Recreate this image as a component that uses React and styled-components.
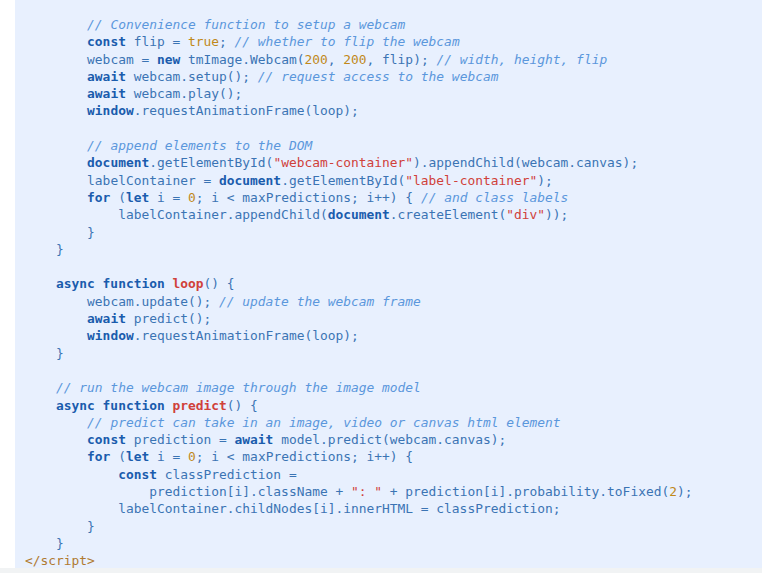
import React from 'react'
import styled, {createGlobalStyle} from 'styled-components'

const GlobalStyle = createGlobalStyle`
  html, body {
    margin: 0;
    padding: 0;
    background: #ffffff;
  }
`

const Page = styled.div`
  width: 762px;
  height: 573px;
  overflow: hidden;
  background: #ffffff;
  display: flex;
  flex-direction: column;
`

const CodeBlock = styled.pre`
  margin: 0 0 0 15px;
  height: 568px;
  box-sizing: border-box;
  padding: 16px 0 0 10px;
  background: #e8f0fe;
  font-family: "DejaVu Sans Mono", "Liberation Mono", monospace;
  font-size: 12.9px;
  line-height: 17.3px;
  color: #3b74b4;
  overflow: hidden;
`

const Footer = styled.div`
  flex: 1;
  background: #f1f3f4;
`

const Line = styled.div`
  white-space: pre;
  height: 17.3px;
`

const colors = {
  p: '#3b74b4',
  k: '#1a5cad',
  c: '#5b97dc',
  s: '#d0413a',
  n: '#c0881a',
  f: '#d0413a',
  t: '#b07a30',
}

const Tok = styled.span`
  color: ${({$type}) => colors[$type]};
  font-weight: ${({$type}) => ($type === 'k' || $type === 'f' ? 700 : 400)};
  font-style: ${({$type}) => ($type === 'c' ? 'italic' : 'normal')};
`

const pad = (n) => ' '.repeat(n)

const lines = [
  [8, [['c', '// Convenience function to setup a webcam']]],
  [8, [['k', 'const'], ['p', ' flip = '], ['n', 'true'], ['p', '; '], ['c', '// whether to flip the webcam']]],
  [8, [['p', 'webcam = '], ['k', 'new'], ['p', ' tmImage.Webcam('], ['n', '200'], ['p', ', '], ['n', '200'], ['p', ', flip); '], ['c', '// width, height, flip']]],
  [8, [['k', 'await'], ['p', ' webcam.setup(); '], ['c', '// request access to the webcam']]],
  [8, [['k', 'await'], ['p', ' webcam.play();']]],
  [8, [['k', 'window'], ['p', '.requestAnimationFrame(loop);']]],
  [0, []],
  [8, [['c', '// append elements to the DOM']]],
  [8, [['k', 'document'], ['p', '.getElementById('], ['s', '"webcam-container"'], ['p', ').appendChild(webcam.canvas);']]],
  [8, [['p', 'labelContainer = '], ['k', 'document'], ['p', '.getElementById('], ['s', '"label-container"'], ['p', ');']]],
  [8, [['k', 'for'], ['p', ' ('], ['k', 'let'], ['p', ' i = '], ['n', '0'], ['p', '; i < maxPredictions; i++) { '], ['c', '// and class labels']]],
  [12, [['p', 'labelContainer.appendChild('], ['k', 'document'], ['p', '.createElement('], ['s', '"div"'], ['p', '));']]],
  [8, [['p', '}']]],
  [4, [['p', '}']]],
  [0, []],
  [4, [['k', 'async function'], ['p', ' '], ['f', 'loop'], ['p', '() {']]],
  [8, [['p', 'webcam.update(); '], ['c', '// update the webcam frame']]],
  [8, [['k', 'await'], ['p', ' predict();']]],
  [8, [['k', 'window'], ['p', '.requestAnimationFrame(loop);']]],
  [4, [['p', '}']]],
  [0, []],
  [4, [['c', '// run the webcam image through the image model']]],
  [4, [['k', 'async function'], ['p', ' '], ['f', 'predict'], ['p', '() {']]],
  [8, [['c', '// predict can take in an image, video or canvas html element']]],
  [8, [['k', 'const'], ['p', ' prediction = '], ['k', 'await'], ['p', ' model.predict(webcam.canvas);']]],
  [8, [['k', 'for'], ['p', ' ('], ['k', 'let'], ['p', ' i = '], ['n', '0'], ['p', '; i < maxPredictions; i++) {']]],
  [12, [['k', 'const'], ['p', ' classPrediction =']]],
  [16, [['p', 'prediction[i].className + '], ['s', '": "'], ['p', ' + prediction[i].probability.toFixed('], ['n', '2'], ['p', ');']]],
  [12, [['p', 'labelContainer.childNodes[i].innerHTML = classPrediction;']]],
  [8, [['p', '}']]],
  [4, [['p', '}']]],
  [0, [['t', '</script>']]],
]

const App = () => {
  return (
    <>
      <GlobalStyle/>
      <Page>
        <CodeBlock>
          {lines.map(([indent, toks], i) => (
            <Line key={i}>
              {pad(indent)}
              {toks.map(([type, text], j) => (
                <Tok key={j} $type={type}>{text}</Tok>
              ))}
            </Line>
          ))}
        </CodeBlock>
        <Footer/>
      </Page>
    </>
  )
}

export default App
